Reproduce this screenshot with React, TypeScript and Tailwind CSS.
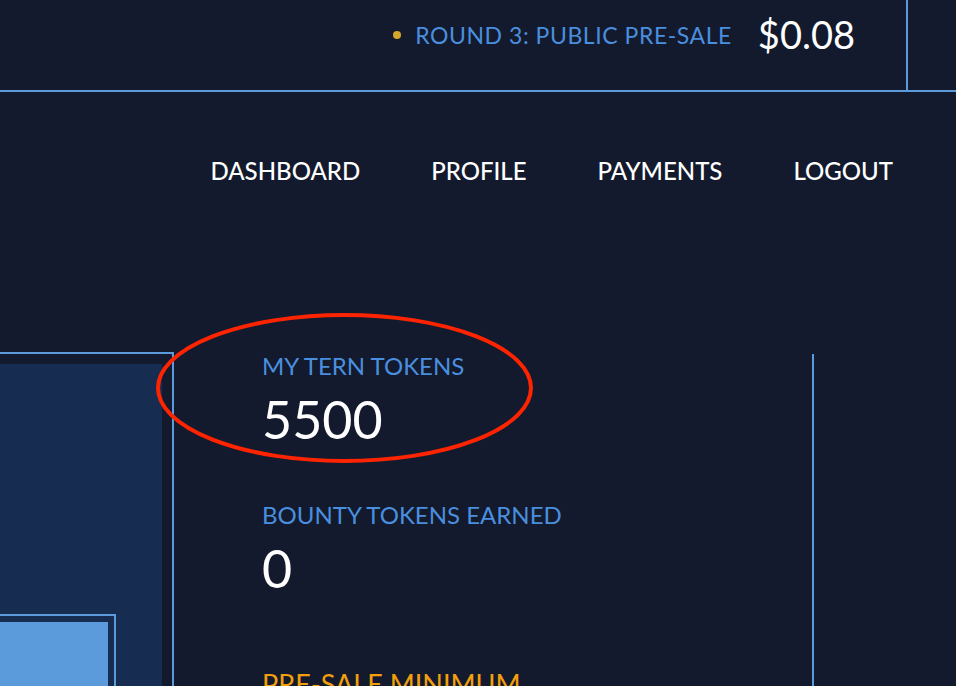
import * as React from 'react'

function StatBlock({ label, value, className = '' }: { label: string; value: string; className?: string }): React.JSX.Element {
  return (
    <div className={className}>
      <p className="text-[24px] leading-none text-[#4a8fdf]">{label}</p>
      <p className="mt-[15px] text-[52px] leading-none text-white">{value}</p>
    </div>
  )
}

function Annotation(): React.JSX.Element {
  return (
    <svg className="pointer-events-none absolute left-0 top-0" width="956" height="686" viewBox="0 0 956 686">
      <ellipse cx="344.5" cy="388" rx="186.5" ry="73" fill="none" stroke="#ff2400" strokeWidth="4" />
    </svg>
  )
}

export default function App(): React.JSX.Element {
  const nav = ['DASHBOARD', 'PROFILE', 'PAYMENTS', 'LOGOUT']

  return (
    <div className="relative h-[686px] w-[956px] overflow-hidden bg-[#131a2d] font-['Lato',sans-serif]">
      <header className="flex h-[92px] justify-end border-b-2 border-[#5b9bdc]">
        <div className="mr-[48px] flex items-center border-r-2 border-[#5b9bdc] pb-[20px] pr-[51px]">
          <span className="h-2 w-2 rounded-full bg-[#d4a82a]" />
          <span className="ml-[14px] text-[23px] leading-none tracking-[0.55px] text-[#4a8fdf]">ROUND 3: PUBLIC PRE-SALE</span>
          <span className="mb-[3px] ml-[26px] text-[38px] leading-none text-white">$0.08</span>
        </div>
      </header>

      <nav className="mr-[63px] mt-[67px] flex justify-end gap-[71px]">
        {nav.map((item) => (
          <a key={item} className="text-[24px] font-medium leading-none text-white">
            {item}
          </a>
        ))}
      </nav>

      <main className="mt-[169px] flex items-start">
        <div className="h-[400px] w-[174px] shrink-0 border-r-2 border-t-2 border-[#5b9bdc] pr-[10px] pt-[10px]">
          <div className="h-full bg-[#162c51] pt-[250px]">
            <div className="h-full w-[116px] border-r-2 border-t-2 border-[#5b9bdc] pr-[6px] pt-[6px]">
              <div className="h-full bg-[#5b9bdb]" />
            </div>
          </div>
        </div>

        <div className="mt-[2px] h-[400px] w-[640px] border-r-2 border-[#5b9bdc] pl-[88px]">
          <StatBlock label="MY TERN TOKENS" value="5500" />
          <StatBlock label="BOUNTY TOKENS EARNED" value="0" className="mt-[58px]" />
          <p className="mt-[76px] text-[27px] leading-none text-[#f29f0c]">PRE-SALE MINIMUM</p>
        </div>
      </main>

      <Annotation />
    </div>
  )
}
